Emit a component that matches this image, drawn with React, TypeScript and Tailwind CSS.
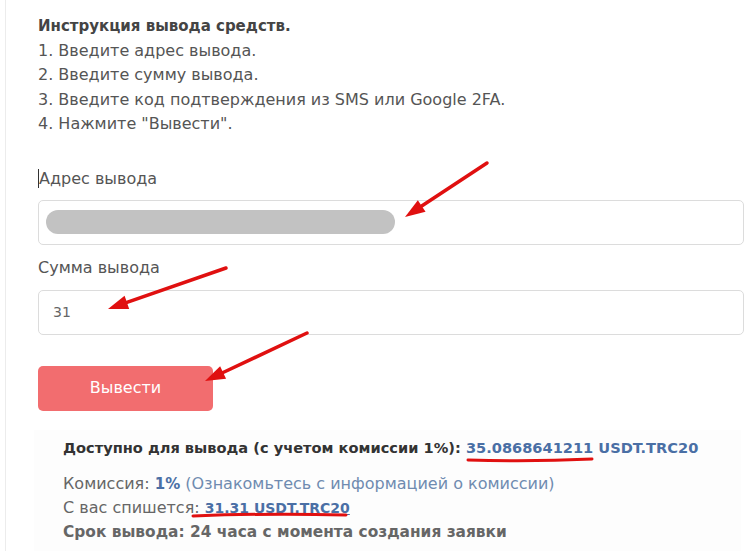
import React from 'react';

const font = { fontFamily: '"DejaVu Sans", "Noto Sans", sans-serif' };

const steps = [
  '1. Введите адрес вывода.',
  '2. Введите сумму вывода.',
  '3. Введите код подтверждения из SMS или Google 2FA.',
  '4. Нажмите "Вывести".',
];

// red annotation arrows drawn over the screenshot
const Arrow = ({ x1, y1, x2, y2 }: { x1: number; y1: number; x2: number; y2: number }) => {
  const a = Math.atan2(y2 - y1, x2 - x1);
  const len = 20;
  const w = 7;
  const bx = x2 - len * Math.cos(a);
  const by = y2 - len * Math.sin(a);
  const px = -Math.sin(a) * w;
  const py = Math.cos(a) * w;
  return (
    <g>
      <line x1={x1} y1={y1} x2={bx} y2={by} stroke="#e01010" strokeWidth={3.5} strokeLinecap="round" />
      <polygon points={`${x2},${y2} ${bx + px},${by + py} ${bx - px},${by - py}`} fill="#e01010" />
    </g>
  );
};

export default function App() {
  return (
    <div className="relative w-[756px] h-[551px] overflow-hidden bg-white" style={font}>
      <div className="ml-[5px] h-full border-l border-[#ececec] pl-[32px] pr-[12px] pt-[14px]">
        {/* Instructions */}
        <div className="text-[16px] leading-[24.5px] text-[#555]">
          <div className="text-[15px] font-bold text-[#444]">Инструкция вывода средств.</div>
          {steps.map((s) => (
            <div key={s}>{s}</div>
          ))}
        </div>

        {/* Address */}
        <div className="mt-[30px] text-[16px] leading-[24px] text-[#555]">
          <span className="border-l border-[#333]">Адрес вывода</span>
        </div>
        <div className="mt-[9px] flex h-[45px] w-[706px] items-center rounded-[5px] border border-[#dcdcdc] px-[7px]">
          <div className="h-[24px] w-[349px] rounded-full bg-[#c2c2c2]" />
        </div>

        {/* Amount */}
        <div className="mt-[11px] text-[16px] leading-[24px] text-[#555]">Сумма вывода</div>
        <div className="mt-[10px] flex h-[45px] w-[706px] items-center rounded-[5px] border border-[#dcdcdc] px-[14px] text-[14px] text-[#666]">
          31
        </div>

        <button className="mt-[31px] h-[45px] w-[175px] rounded-[5px] bg-[#f26d6f] text-[16px] text-white">
          Вывести
        </button>

        {/* Available / commission */}
        <div className="relative ml-[-4px] mt-[19px] w-[707px] bg-[#fdfdfd] pl-[29px] pt-[6px] pb-[10px] text-[16px] leading-[24px] text-[#666]">
          <div className="text-[14.6px] font-bold text-[#333]">
            Доступно для вывода (с учетом комиссии 1%):{' '}
            <span className="text-[#4a6fa5]">35.0868641211 USDT.TRC20</span>
          </div>
          <div className="mt-[12px]">
            Комиссия: <span className="text-[15px] font-bold text-[#4a6fa5]">1%</span>{' '}
            <span className="text-[#6f8bb0]">(Ознакомьтесь с информацией о комиссии)</span>
          </div>
          <div>
            С вас спишется:{' '}
            <span className="text-[14px] font-bold text-[#4a6fa5] underline">31.31 USDT.TRC20</span>
          </div>
          <div className="text-[15.4px] font-semibold text-[#666]">Срок вывода: 24 часа с момента создания заявки</div>
        </div>
      </div>

      <svg className="pointer-events-none absolute left-0 top-0" width={756} height={551}>
        <Arrow x1={487} y1={163} x2={405} y2={217} />
        <Arrow x1={226} y1={268} x2={108} y2={309} />
        <Arrow x1={307} y1={333} x2={205} y2={381} />
        <path d="M468 460 Q530 462 592 459" stroke="#e01010" strokeWidth={3} fill="none" strokeLinecap="round" />
        <path d="M193 516 Q268 513 346 515" stroke="#e01010" strokeWidth={3} fill="none" strokeLinecap="round" />
      </svg>
    </div>
  );
}
